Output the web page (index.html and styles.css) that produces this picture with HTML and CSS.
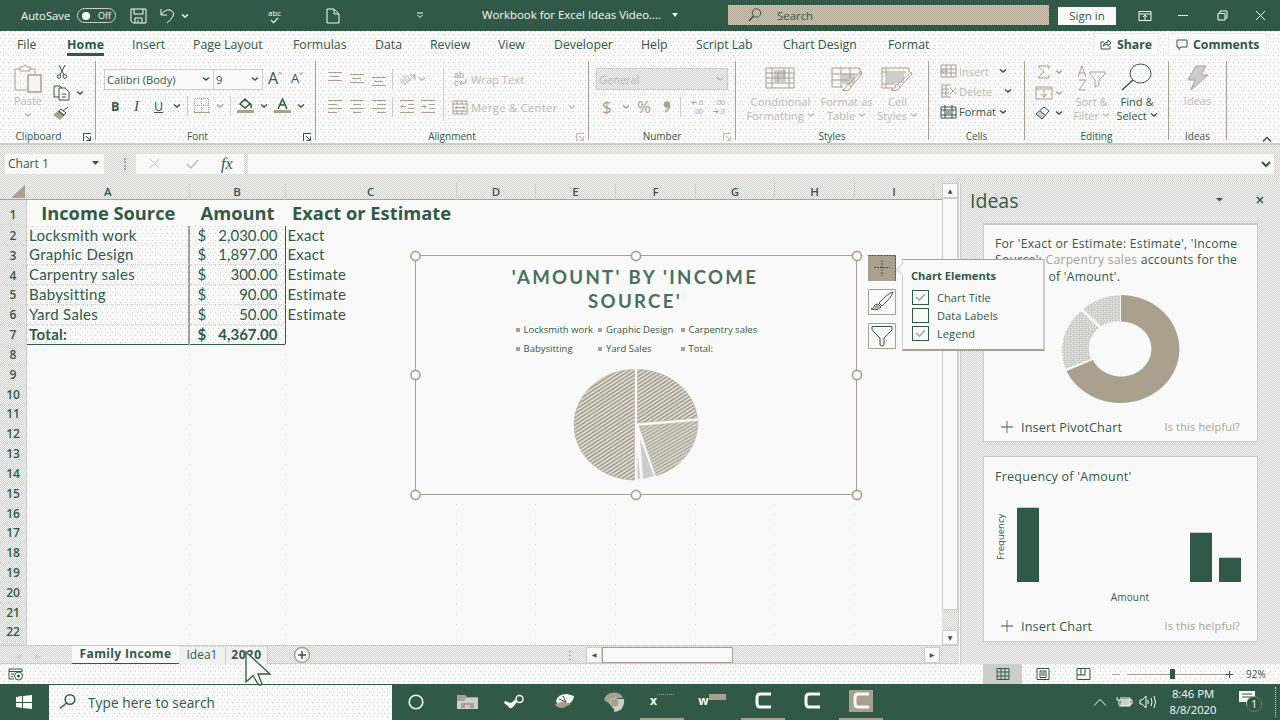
FILE: index.html
```html
<!DOCTYPE html>
<html lang="en">
<head>
<meta charset="utf-8">
<title>Workbook for Excel Ideas Video</title>
<link rel="stylesheet" href="styles.css">
</head>
<body>
<svg class="defs" width="0" height="0">
  <symbol id="chev" viewBox="0 0 8 6"><path d="M1 1.500L4 4L7 1.500" fill="none" stroke="currentColor" stroke-width="1.500"/></symbol>
  <symbol id="launch" viewBox="0 0 9 9"><path d="M.5 8V.5H8M3 3L7 7M7.500 3.500V7.500H3.500" fill="none" stroke="currentColor"/></symbol>
  <symbol id="camt" viewBox="0 0 24 22"><path d="M20 4H9Q6 4 6 8V13Q6 17 9 17H20" fill="none" stroke="#faf9f9" stroke-width="3"/></symbol>
  <symbol id="check" viewBox="0 0 10 8"><path d="M1 3.500L4 6.500L9 1" fill="none" stroke="currentColor" stroke-width="1.300"/></symbol>
</svg>
<div class="app">
  <header class="titlebar">
    <span class="autosave">AutoSave</span>
    <span class="toggle"><i></i>Off</span>
    <svg width="18" height="16"><path d="M1 1H16V15H3L1 13ZM4 1V6H13V1M5 15V10H12V15M8 12V15" class="ln lt"/></svg>
    <svg width="16" height="16"><path d="M1 1V7H7M1 7Q5 1 10 2Q15 4 13 8Q11 12 7 15" class="ln lt"/></svg>
    <svg width="8" height="6" class="tl"><use href="#chev"/></svg>
    <span class="abc">abc<svg width="9" height="7"><use href="#check"/></svg></span>
    <svg width="14" height="16"><path d="M1 1H8L13 6V15H1ZM8 1V6H13" class="ln lt"/></svg>
    <svg width="8" height="7"><path d="M1 1H7M1.500 3L4 5.500L6.500 3" class="ln lt"/></svg>
    <span class="doc">Workbook for Excel Ideas Video....</span>
    <svg width="8" height="6"><path d="M1 0H7L4 4Z" fill="#faf9f9"/></svg>
    <div class="search"><svg width="14" height="14"><circle cx="8.500" cy="5" r="4.200" class="ln"/><path d="M5.500 8L1 13" class="ln w15"/></svg><span>Search</span></div>
    <button class="signin">Sign in</button>
    <svg width="14" height="12"><path d="M1 1.500H13V10.500H1ZM1 4H13M7 10V5M5 7L7 5L9 7" class="ln lt"/></svg>
    <svg width="12" height="4"><path d="M0 1.500H10" class="ln lt"/></svg>
    <svg width="11" height="11"><path d="M1 3.500H8V10H1ZM3 3.500V1H10V8H8" class="ln lt"/></svg>
    <svg width="11" height="11"><path d="M0 1L9 10M9 1L0 10" class="ln lt"/></svg>
  </header>

  <section class="ribbon">
    <nav class="tabs">
      <span>File</span><span class="on">Home</span><span>Insert</span><span>Page Layout</span><span>Formulas</span><span>Data</span><span>Review</span><span>View</span><span>Developer</span><span>Help</span><span>Script Lab</span><span>Chart Design</span><span>Format</span>
      <span class="pill"><svg width="12" height="11"><path d="M4 3H1V10H10V7M3 7Q4 3 8 3V1L11 4L8 7V5Q5 5 3 7Z" class="ln"/></svg>Share</span>
      <span class="pill"><svg width="12" height="12"><path d="M1 1H11V8H5L3 10.500V8H1Z" class="ln"/></svg>Comments</span>
    </nav>
    <div class="groups">
      <div class="group g-clip">
        <div class="body">
          <div class="big off paste"><svg width="30" height="30"><path d="M7 5H2V26H14M17 5H22V10M7 7V3H10Q12 -1 14 3H17V7Z" class="ln ta"/><path d="M15 11H28V28H15Z" fill="#f5f5f3" class="ta w15"/></svg><span>Paste</span><svg width="8" height="6"><use href="#chev"/></svg></div>
          <div class="stack">
            <svg width="12" height="14"><path d="M3 0L8 10M9 0L4 10" class="ln"/><circle cx="3" cy="11.500" r="1.800" class="ln"/><circle cx="9" cy="11.500" r="1.800" class="ln"/></svg>
            <span class="pair"><svg width="18" height="16"><path d="M6 12H1V1H7L9 3M6 3H12L16 7V15H6ZM9 9H13M9 12H13" class="ln"/></svg><svg width="8" height="6"><use href="#chev"/></svg></span>
            <svg width="17" height="14"><path d="M15 1L10 5M8 3L13 7L11 9L6 5Z" class="ln"/><path d="M5 5L11 10L7 14L0 9Z" fill="#a9a18e"/><path d="M5 5L11 10" class="ln"/></svg>
          </div>
        </div>
        <footer>Clipboard</footer><svg class="launch" width="9" height="9"><use href="#launch"/></svg>
      </div>
      <div class="group g-font">
        <div class="body">
          <div class="r1"><span class="combo">Calibri (Body)<svg width="8" height="6"><use href="#chev"/></svg></span><span class="combo c9">9<svg width="8" height="6"><use href="#chev"/></svg></span><span class="bigA">A<svg width="6" height="5"><path d="M1 4L3 1L5 4" class="ln ta"/></svg></span><span class="smA">A<svg width="6" height="5"><path d="M1 1L3 4L5 1" class="ln ta"/></svg></span></div>
          <div class="r2"><b>B</b><i class="it">I</i><u>U</u><svg width="8" height="6"><use href="#chev"/></svg><em></em>
            <svg width="16" height="16"><path d="M.5 1V14M7.500 1V14M14.500 1V14M1 .5H15M1 7.500H15" class="ln ta" stroke-dasharray="1 1"/><path d="M0 14.500H16" class="ln ta"/></svg>
            <svg class="tan" width="8" height="6"><use href="#chev"/></svg><em></em>
            <svg width="17" height="16"><path d="M3 6L8 1L13 6L8 10ZM12 5Q15 6 14 10" class="ln w15"/><path d="M0 12H17V15H0Z" fill="#a9a18e"/></svg>
            <svg width="8" height="6"><use href="#chev"/></svg>
            <svg width="17" height="16"><path d="M4 11L8.500 1L13 11M6 7H11" class="ln w15"/><path d="M0 12H17V15H0Z" fill="#a9a18e"/></svg>
            <svg width="8" height="6"><use href="#chev"/></svg></div>
        </div>
        <footer>Font</footer><svg class="launch" width="9" height="9"><use href="#launch"/></svg>
      </div>
      <div class="group g-align off">
        <div class="body">
          <div class="lefts">
            <div class="r1"><svg width="16" height="16"><path d="M1 1.500H15M3 5.500H12M1 9.500H15" class="ln ta"/></svg><svg width="16" height="16"><path d="M1 3.500H15M3 7.500H12M1 11.500H15" class="ln ta"/></svg><svg width="16" height="16"><path d="M1 6.500H15M3 10.500H12M1 14.500H15" class="ln ta"/></svg><em></em><span class="rot"><span>ab</span><svg width="16" height="14"><path d="M3 13L14 3M9 3H14V8" class="ln ta"/></svg></span><svg width="8" height="6"><use href="#chev"/></svg></div>
            <div class="r2"><svg width="16" height="16"><path d="M1 1.500H15M1 5.500H10M1 9.500H15M1 13.500H10" class="ln ta"/></svg><svg width="16" height="16"><path d="M1 1.500H15M4 5.500H12M1 9.500H15M4 13.500H12" class="ln ta"/></svg><svg width="16" height="16"><path d="M1 1.500H15M6 5.500H15M1 9.500H15M6 13.500H15" class="ln ta"/></svg><em></em><svg width="16" height="16"><path d="M1 1.500H15M9 5.500H15M9 9.500H15M1 13.500H15M7 7.500H2M4 5.500L2 7.500L4 9.500" class="ln ta"/></svg><svg width="16" height="16"><path d="M1 1.500H15M9 5.500H15M9 9.500H15M1 13.500H15M1 7.500H6M4 5.500L6 7.500L4 9.500" class="ln ta"/></svg></div>
          </div>
          <div class="rights">
            <div class="r1"><span class="wrapic"><span>ab</span><span>c<svg width="8" height="7"><path d="M7 0V4H1M3 2L1 4L3 6" class="ln ta"/></svg></span></span><span>Wrap Text</span></div>
            <div class="r2"><svg width="16" height="15"><path d="M1 1H15V14H1ZM1 4H15M1 11H15M5 1V4M10 1V4M5 11V14M10 11V14M3 7.500H13M5 6L3 7.500L5 9M11 6L13 7.500L11 9" class="ln ta"/></svg><span class="merge">Merge &amp; Center</span><svg width="8" height="6"><use href="#chev"/></svg></div>
          </div>
        </div>
        <footer>Alignment</footer><svg class="launch" width="9" height="9"><use href="#launch"/></svg>
      </div>
      <div class="group g-num off">
        <div class="body">
          <div class="numbox">General<svg width="8" height="6"><use href="#chev"/></svg></div>
          <div class="r2"><span class="sym">$</span><svg width="8" height="6"><use href="#chev"/></svg><span class="sym">%</span><svg width="8" height="12"><circle cx="4" cy="3.500" r="3.200" fill="#a9a18e"/><path d="M6.300 3Q7 8 2 11" class="ln ta w15"/></svg><em></em><span class="dec"><span><svg width="6" height="5"><path d="M6 2.500H1M3 .5L1 2.500L3 4.500" class="ln ta"/></svg>.0</span><span>.00</span></span><span class="dec"><span>.00</span><span><svg width="6" height="5"><path d="M0 2.500H5M3 .5L5 2.500L3 4.500" class="ln ta"/></svg>.0</span></span></div>
        </div>
        <footer>Number</footer><svg class="launch" width="9" height="9"><use href="#launch"/></svg>
      </div>
      <div class="group g-styles off">
        <div class="body">
          <div class="big"><svg width="30" height="24"><path d="M9 4H21V16H9Z" fill="#cdcecb"/><path d="M1 2H29V22H1ZM1 7H29M1 12H29M1 17H29M7 2V22M13 7V17M19 2V12M24 2V22" class="ln ta"/></svg><span>Conditional<br>Formatting <svg width="8" height="6"><use href="#chev"/></svg></span></div>
          <div class="big"><svg width="32" height="26"><path d="M11 8H24V18H11Z" fill="#cdcecb"/><path d="M1 2H29V9M1 2V21H12M1 8H26M1 14H18M10 2V21M19 2V13M30 5L18 18L20 21L31 8ZM18 18Q15 18 15 21Q14 24 11 24Q18 26 20 21" class="ln ta"/></svg><span>Format as<br>Table <svg width="8" height="6"><use href="#chev"/></svg></span></div>
          <div class="big"><svg width="32" height="26"><path d="M6 7H23V17H6Z" fill="#cdcecb"/><path d="M1 2H28V6M1 2V22H12M1 6H25M5 2V22M1 18H14M30 6L17 18L19 21L31 8ZM17 18Q14 18 14 21Q13 24 10 24Q17 26 19 21" class="ln ta"/></svg><span>Cell<br>Styles <svg width="8" height="6"><use href="#chev"/></svg></span></div>
        </div>
        <footer>Styles</footer>
      </div>
      <div class="group g-cells">
        <div class="body">
          <div class="off"><svg width="17" height="14"><path d="M1 1H16V13H1ZM1 5H16M1 9H16M6 1V13M11 1V13M1 7H8M4 5L1 7L4 9" class="ln ta"/></svg><span>Insert</span><svg class="dk" width="8" height="6"><use href="#chev"/></svg></div>
          <div class="off"><svg width="17" height="14"><path d="M1 1H11M1 5H9M1 9H9M1 13H11M2 1V13M6 1V13M10 4L16 10M16 4L10 10" class="ln ta"/></svg><span>Delete</span><svg class="dk push" width="8" height="6"><use href="#chev"/></svg></div>
          <div><svg width="17" height="15"><path d="M1 3H16V14H1ZM1 6H16M1 11H16M5 1V14M12 1V14" class="ln"/><path d="M6 7H11V10H6Z" fill="#a9a18e"/></svg><span>Format</span><svg width="8" height="6"><use href="#chev"/></svg></div>
        </div>
        <footer>Cells</footer>
      </div>
      <div class="group g-edit">
        <div class="body">
          <div class="stack">
            <span class="pair tan"><svg width="18" height="14"><path d="M14 4V1H3L9 7L3 13H14V10" class="ln ta"/></svg><svg width="8" height="6"><use href="#chev"/></svg></span>
            <span class="pair tan"><svg width="18" height="14"><path d="M1 1H17V13H1ZM1 3H17M9 4V11M6 8L9 11L12 8" class="ln ta"/></svg><svg width="8" height="6"><use href="#chev"/></svg></span>
            <span class="pair"><svg width="18" height="14"><path d="M5 5L10 9L7 13L1 9Z" fill="#cdcecb"/><path d="M1 8L9 1L14 5L7 13ZM5 5L10 9" class="ln"/></svg><svg width="8" height="6"><use href="#chev"/></svg></span>
          </div>
          <div class="big off"><svg width="30" height="27"><path d="M1 12L5 1L9 12M2 8H8M2 15H9L2 25H9M13 7H28V9L22 15V20L18 22V15L13 9Z" class="ln ta"/></svg><span>Sort &amp;<br>Filter <svg width="8" height="6"><use href="#chev"/></svg></span></div>
          <div class="big"><svg width="30" height="28"><ellipse cx="18.500" cy="10.500" rx="10.500" ry="9.500" class="ln"/><path d="M11 17L0 27" class="ln w15"/></svg><span>Find &amp;<br>Select <svg width="8" height="6"><use href="#chev"/></svg></span></div>
        </div>
        <footer>Editing</footer>
      </div>
      <div class="group g-ideas">
        <div class="body"><div class="big off"><svg width="22" height="27"><path d="M9 1H19L14 10H21L4 25L8 15H1Z" fill="#cdcecb" class="ta"/></svg><span>Ideas</span></div></div>
        <footer>Ideas</footer>
      </div>
      <svg class="collapse" width="10" height="7"><path d="M1 5.500L5 1.500L9 5.500" class="ln w15"/></svg>
    </div>
  </section>

  <div class="fbar">
    <div class="name">Chart 1<svg width="7" height="4"><path d="M0 0H7L3.500 4Z" fill="#305a47"/></svg></div>
    <span class="grip"></span>
    <div class="fx"><svg width="12" height="10"><path d="M1 0L10 9M10 0L1 9" class="ln ss"/></svg><svg width="13" height="10"><path d="M1 5L5 9L12 1" class="ln ss w15"/></svg><i>fx</i></div>
    <div class="input"><svg width="10" height="7"><path d="M1 1L5 5L9 1" class="ln w2"/></svg></div>
  </div>

  <main class="work">
    <div class="sheetcol">
      <div class="cols"><span class="corner"></span><span>A</span><span>B</span><span>C</span><span>D</span><span>E</span><span>F</span><span>G</span><span>H</span><span>I</span></div>
      <div class="sheet">
        <div class="nums"><span>1</span><span>2</span><span>3</span><span>4</span><span>5</span><span>6</span><span>7</span><span>8</span><span>9</span><span>10</span><span>11</span><span>12</span><span>13</span><span>14</span><span>15</span><span>16</span><span>17</span><span>18</span><span>19</span><span>20</span><span>21</span><span>22</span></div>
        <div class="cells">
          <div class="row head"><span class="h1">Income Source</span><span class="h2">Amount</span><span class="h3">Exact or Estimate</span></div>
          <div class="row"><span class="a">Locksmith work</span><span class="b"><i>$</i>2,030.00</span><span class="c">Exact</span></div>
          <div class="row"><span class="a">Graphic Design</span><span class="b"><i>$</i>1,897.00</span><span class="c">Exact</span></div>
          <div class="row"><span class="a">Carpentry sales</span><span class="b"><i>$</i>300.00</span><span class="c">Estimate</span></div>
          <div class="row"><span class="a">Babysitting</span><span class="b"><i>$</i>90.00</span><span class="c">Estimate</span></div>
          <div class="row"><span class="a">Yard Sales</span><span class="b"><i>$</i>50.00</span><span class="c">Estimate</span></div>
          <div class="row total"><span class="a">Total:</span><span class="b"><i>$</i>4,367.00</span><span class="c"></span></div>
          <div class="lines"><i></i><i></i><i></i><i></i><i></i><i></i><i></i><i></i></div>
        </div>
        <div class="chart">
          <h2>'AMOUNT' BY 'INCOME<br>SOURCE'</h2>
          <div class="legend"><span><i></i>Locksmith work</span><span><i></i>Graphic Design</span><span><i></i>Carpentry sales</span><span><i></i>Babysitting</span><span><i></i>Yard Sales</span><span><i></i>Total:</span></div>
          <svg class="pie" width="126" height="114" viewBox="0 0 126 114">
            <defs><pattern id="hatch" width="3" height="3.200" patternUnits="userSpaceOnUse" patternTransform="rotate(-33)"><path d="M0 0H3V3.200H0Z" fill="#eceae6"/><path d="M0 0H3V1.900H0Z" fill="#a9a18e"/></pattern>
            <pattern id="hatch2" width="3" height="3" patternUnits="userSpaceOnUse" patternTransform="rotate(-30)"><path d="M0 0H3V3H0Z" fill="#e0dfda"/><path d="M0 0H3V1.500H0Z" fill="#a9a18e"/></pattern></defs>
            <path d="M61.500 1.500A60.500 55.250 0 0 0 61.500 112Z" fill="url(#hatch)" stroke="#b5afa0" stroke-width=".6"/>
            <path d="M64.500 1.500A61 54 0 0 1 124.500 50L64.500 55Z" fill="url(#hatch)" stroke="#b5afa0" stroke-width=".6"/>
            <path d="M66 58L125 53A61 56 0 0 1 83 108Z" fill="url(#hatch2)" stroke="#b5afa0" stroke-width=".4"/>
            <path d="M67 70L81 108L70 111Z" fill="#cdcecb"/><path d="M64.500 84L67.500 111H64.500Z" fill="#cdcecb"/>
          </svg>
          <svg class="handles" width="452" height="250" fill="#faf9f9" stroke="#a9a18e" stroke-width="1.600"><circle cx="5.500" cy="6" r="4.600"/><circle cx="226" cy="6" r="4.600"/><circle cx="447" cy="6" r="4.600"/><circle cx="5.500" cy="125" r="4.600"/><circle cx="447" cy="125" r="4.600"/><circle cx="5.500" cy="245" r="4.600"/><circle cx="226" cy="245" r="4.600"/><circle cx="447" cy="245" r="4.600"/></svg>
        </div>
        <div class="tools">
          <svg width="28" height="26"><path d="M0 0H28V26H0Z" fill="#a9a18e"/><path d="M.5 .5H27.500V25.500" class="ln" stroke-dasharray="2 1"/><path d="M14 5V21M6 12.500H22" class="ln" stroke-dasharray="2 1"/></svg>
          <svg width="28" height="26"><path d="M.5 .5H27.500V25.500H.5Z" class="ln ta"/><path d="M25 3Q20 4 11 14L14 17Q23 9 25 3ZM10 15Q6 15 6 18Q5 20 3 20Q10 22 13 18Z" fill="#faf9f9" class="dkst"/><path d="M10 16Q7 16 7 18L6 20Q10 20 12 18Z" fill="#a9a18e"/></svg>
          <svg width="28" height="26"><path d="M.5 .5H27.500V25.500H.5Z" class="ln ta"/><path d="M4 3.500H24V7L16 15V22Q14 24 12 22V15L4 7Z" class="ln"/></svg>
        </div>
      </div>
    </div>
    <div class="vscroll"><span class="btn">▲</span><span class="thumb"></span><span class="gap"></span><span class="btn">▼</span></div>
    <div class="flyout"><b>Chart Elements</b><label><i><svg width="11" height="9"><use href="#check"/></svg></i>Chart Title</label><label><i></i>Data Labels</label><label><i><svg width="11" height="9"><use href="#check"/></svg></i>Legend</label></div>
    <div class="sheettabs"><span class="arr">◂</span><span class="arr">▸</span><b class="cur">Family Income</b><span class="st">Idea1</span><b class="st">2020</b><svg width="18" height="18"><circle cx="9" cy="9" r="7.500" fill="#faf9f9" class="ta w15"/><path d="M9 5V13M5 9H13" class="ln w15"/></svg><span class="dots"></span><div class="hs"><span class="btn">◀</span><span class="thumb"></span><span></span><span class="btn">▶</span></div></div>
    <aside class="pane">
      <div class="phead"><h1>Ideas</h1><svg width="7" height="5"><path d="M0 0H7L3.500 3.500Z" fill="#305a47"/></svg><svg width="8" height="8"><path d="M1 1L7 7M7 1L1 7" class="ln w15"/></svg></div>
      <div class="card c1">
        <p>For 'Exact or Estimate: Estimate', 'Income<br>Source': <span>Carpentry sales</span> accounts for the<br><span class="maj">majority</span> of 'Amount'.</p>
        <svg width="122" height="112" viewBox="0 0 122 112">
          <defs><pattern id="dots" width="3" height="4" patternUnits="userSpaceOnUse"><path d="M0 0H4V4H0Z" fill="#cdcecb"/><path d="M0 0H1V1H0ZM2 2H3V3H2Z" fill="#faf9f9"/></pattern></defs>
          <path d="M61 2A59 54 0 1 1 6.500 78L33 67A30.500 27.500 0 1 0 61 28.500Z" fill="#a9a18e"/>
          <path d="M5.500 76A59 54 0 0 1 21 18L39 35A30.500 27.500 0 0 0 31 66Z" fill="url(#dots)"/>
          <path d="M23 16A59 54 0 0 1 60 2V28.500A30 27 0 0 0 41 33Z" fill="url(#dots)"/>
        </svg>
        <div class="act"><svg width="14" height="14"><path d="M7 1V13" class="ln ta w15"/><path d="M1 7H13" class="ln"/></svg><span>Insert PivotChart</span><small>Is this helpful?</small></div>
      </div>
      <div class="card c2">
        <p>Frequency of 'Amount'</p>
        <div class="freq"><span class="yl">Frequency</span><div class="bars"><i style="height:75px"></i><i style="height:50px"></i><i style="height:25px"></i></div></div>
        <div class="xl">Amount</div>
        <div class="act"><svg width="14" height="14"><path d="M7 1V13" class="ln ta w15"/><path d="M1 7H13" class="ln"/></svg><span>Insert Chart</span><small>Is this helpful?</small></div>
      </div>
    </aside>
  </main>

  <div class="status">
    <svg width="16" height="13"><path d="M1 1H14V4M1 1V11H6M1 3.500H14M3 6H6M3 8.500H5" class="ln"/><circle cx="10.500" cy="8" r="4" class="ln"/><circle cx="10.500" cy="8" r="1.500" fill="#305a47"/></svg>
    <span class="view"><svg width="14" height="12"><path d="M1 .5H13V11.500H1ZM1 4H13M1 8H13M5 .5V12M9 .5V12" class="ln"/></svg></span>
    <svg width="14" height="12"><path d="M1 .5H13V11.500H1ZM4 3H10V9.500H4ZM5 5H9M5 7H9" class="ln"/></svg>
    <svg width="15" height="12"><path d="M1 .5H14V11.500H1ZM5 1V7H1M9 1V7M5 7H9" class="ln"/></svg>
    <svg width="9" height="9"><path d="M0 4.500H8" class="ln ta"/></svg>
    <svg width="100" height="12"><path d="M0 6.500H99" class="ln ta"/><path d="M43 1H48V11H43Z" fill="#305a47"/></svg>
    <svg width="9" height="9"><path d="M0 4.500H7M3.500 1V8" class="ln"/></svg>
    <span class="pct">92%</span>
  </div>

  <div class="taskbar">
    <svg width="17" height="15"><path d="M0 2L6 1V7H0ZM7 1L16 0V7H7ZM0 8H6V13L0 12ZM7 8H16V14L7 13Z" fill="#faf9f9"/></svg>
    <div class="tsearch"><svg width="18" height="16"><circle cx="11" cy="5.500" r="4.800" class="ln w15"/><path d="M7.500 9L1 14.500" class="ln w15"/></svg>Type here to search</div>
    <svg width="17" height="16"><circle cx="8" cy="8" r="6.800" fill="none" stroke="#faf9f9" stroke-width="1.600"/></svg>
    <svg width="23" height="18"><path d="M1 2H9L11 4H22V16H1Z" fill="#a9a18e"/><path d="M1 8H8L10 5H22V16H1Z" fill="#cdcecb"/><path d="M5 10H18V15H14V12H9V15H5Z" fill="#a9a18e"/></svg>
    <svg width="21" height="18"><circle cx="15.500" cy="6" r="3.500" fill="none" stroke="#faf9f9" stroke-width="1.500"/><path d="M13 9L9 14Q6 17 4 13L0 10L1 8L7 10L12 6Z" fill="#faf9f9"/></svg>
    <svg width="21" height="18"><path d="M2 8Q4 1 13 1L20 3Q20 8 14 11L5 13Z" fill="#faf9f9"/><path d="M1 11L10 8L17 11L9 15Q2 15 1 11Z" fill="#a9a18e"/><path d="M9 3L12 9L5 6" fill="none" stroke="#305a47"/></svg>
    <svg width="23" height="22"><path d="M1 9A10 9 0 0 1 20 7H11L7 13Z" fill="#a9a18e"/><path d="M2 10L8 16Q12 17 11 21Q22 20 21 8H15L14 15L8 16Z" fill="#cdcecb"/><circle cx="11.500" cy="11.500" r="4.500" fill="#a9a18e" stroke="#cdcecb"/></svg>
    <span class="ico on"><b>x</b><i></i></span>
    <span class="ico"><b>w</b><i class="f"></i></span>
    <span class="ico on"><svg width="24" height="22"><use href="#camt"/></svg></span>
    <span class="ico"><svg width="24" height="22"><use href="#camt"/></svg></span>
    <span class="ico on"><svg class="bgt" width="24" height="22"><use href="#camt"/></svg></span>
    <svg width="14" height="9"><path d="M1 7.500L7 1.500L13 7.500" class="ln lt"/></svg>
    <svg width="17" height="12"><path d="M5 3H14V10H4Z" fill="#cdcecb"/><path d="M6 2H14V10H3M14 4H16V8H14M1 1V4H5V1M3 4V9" class="ln lt"/></svg>
    <svg width="18" height="14"><path d="M1 5H3L7 1V13L3 9H1ZM9 5V9M12 3Q14 7 12 11M15 1Q18 7 15 13" class="ln lt"/></svg>
    <div class="clock">8:46 PM<br>8/8/2020</div>
    <svg width="26" height="24"><path d="M0 1H16V12H10L7 16V12H0Z" fill="#faf9f9"/><path d="M3 4H13M3 7H13" class="ln"/><circle cx="15" cy="14" r="7.500" fill="#305a47" stroke="#a9a18e" stroke-dasharray="1 1"/><text x="12" y="18" class="badge">1</text></svg>
    <span class="desk"></span>
  </div>
  <svg class="cursor" width="28" height="38"><path d="M2 2V32L9 25.500L14 34Q16 36 18 34L14 24H26Z" fill="#faf9f9" stroke="#305a47" stroke-width="1.300"/></svg>
</div>
</body>
</html>
```
FILE: styles.css
```css
:root{--g:#305a47;--l:#faf9f9;--s:#cdcecb;--t:#a9a18e;
--mesh:repeating-conic-gradient(#cdcecb 0 25%,#faf9f9 0 50%) 0 0/2px 2px;
--dust:conic-gradient(from 270deg at 1px 1px,#cdcecb 90deg,transparent 0) 0 0/5px 7px,conic-gradient(from 270deg at 1px 1px,#cdcecb 90deg,transparent 0) 3px 3px/5px 7px,#faf9f9}
*{box-sizing:border-box}
body{margin:0;background:var(--l);font-family:"Open Sans","Noto Sans",sans-serif;font-size:12px;color:var(--g)}
svg{display:block;flex:none;overflow:visible}
.defs{position:absolute}
.ln{fill:none;stroke:var(--g);stroke-width:1}
.ta{stroke:var(--t)}.lt{stroke:var(--l)}.ss{stroke:#c0bdb3}
.dkst{stroke:var(--g)}
.w15{stroke-width:1.5}.w2{stroke-width:2}
.tan{color:var(--t)}
.app{position:relative;width:1280px;height:720px;overflow:hidden;display:flex;flex-direction:column;white-space:nowrap}

.titlebar{height:31px;background:var(--g);color:var(--l);display:grid;align-items:center;padding-left:21px;font-size:11.300px;
grid-template-columns:56px 53px 30px 21px 87px 58px 90px 66px 189px 57px 330px 80px 40px 39px 39px 1fr}
.tl{color:var(--l)}
.toggle{width:39px;height:15px;border:1px solid var(--s);border-radius:8px;display:flex;align-items:center;gap:8px;padding-left:4px;font-size:9px}
.toggle i{width:8px;height:8px;border-radius:50%;background:var(--l)}
.abc{font-size:8px;line-height:9px}.abc svg{margin-left:2px}
.doc{font-size:11.400px;margin-top:-2px}
.search{width:321px;height:20px;margin-top:-1px;background:repeating-conic-gradient(#a9a18e 0 25%,#cdcecb 0 50%) 0 0/2px 2px;color:var(--g);display:flex;align-items:center;padding-left:20px;gap:15px;font-size:11.400px;font-weight:500}
.signin{width:58px;height:18px;border:0;background:var(--l);color:var(--g);font:11.500px "Open Sans",sans-serif;padding:0}

.ribbon{height:114px;background:var(--dust);border-bottom:2px solid var(--s)}
.tabs{height:29px;display:grid;padding-left:17px;grid-template-columns:50px 65px 61px 100px 82px 55px 68px 56px 87px 55px 87px 105px 205px 75px 99px;line-height:27px;font-size:12.300px}
.tabs .on{font-weight:700;width:37px;border-bottom:3px solid var(--g);height:25px;letter-spacing:.2px}
.pill{display:flex;align-items:center;gap:5px;font-weight:700;background:var(--l);height:23px;margin-top:2px;width:66px;border:1px dotted #dededc;padding-left:6px;line-height:20px}
.pill+.pill{width:99px;padding-left:7px}
.groups{display:flex;height:83px;padding-top:1px}
.group{position:relative;border-right:1px solid var(--t);height:79px;display:flex;flex-direction:column;flex:none}
.group footer{height:13px;line-height:13px;font-size:10px;text-align:center;color:var(--g);margin-top:auto;margin-bottom:-3px}
.group .body{height:66px}
.launch{position:absolute;right:3px;bottom:-2px;width:9px}
.off{color:#bdbab0}
.group em{width:1px;height:20px;background:var(--s)}
.big{display:flex;flex-direction:column;align-items:center;text-align:center;font-size:11px;line-height:14px}
.big span svg{display:inline-block;vertical-align:2px}
.stack{display:grid;grid-template-rows:21px 21px 20px;align-items:center}
.pair{display:flex;align-items:center;gap:5px}
.r1,.r2{display:grid;align-items:center}
.g-clip{width:96px}.g-clip footer{padding-right:18px;font-size:10.200px}
.g-clip .body{display:grid;grid-template-columns:37px 1fr;padding-left:16px}
.g-clip .stack svg:first-child{margin-left:3px}.g-clip .pair svg:first-child{margin-left:0!important}
.paste{margin-left:-6px;padding-top:3px;width:36px}.paste>span{margin-top:0}.paste>svg:last-child{margin-top:4px}
.g-font{width:220px}.g-font .body{padding:7px 0 0 8px}.g-font footer{padding-right:16px}
.g-font .r1{height:22px;grid-template-columns:110px 54px 23px 1fr}
.combo{height:21px;border:1px solid var(--s);background:var(--l);display:flex;align-items:center;justify-content:space-between;padding:0 3px 0 2px;font-size:11.100px}
.combo.c9{width:50px;border-left:1px solid var(--s);margin-left:-1px}
.bigA,.smA{font-size:16px;font-weight:400;display:flex;line-height:18px;margin:-3px 0 0}.smA{font-size:13px}
.bigA svg,.smA svg{margin:2px 0 0 -1px}
.g-font .r2{height:26px;margin-top:3px;padding-left:7px;font-size:12.500px;grid-template-columns:23px 20px 19px 14px 7px 22px 14px 7px 23px 14px 23px 1fr}
.it{font-family:"Liberation Serif",serif;font-size:15px}
.g-align{width:273px}.g-align .body{display:flex;padding-top:7px}
.lefts{padding-left:11px;width:128px;border-right:1px solid var(--s);height:53px}
.g-align .r1{height:22px}.g-align .r2{height:26px;margin-top:4px}
.lefts .r1{grid-template-columns:22px 22px 21px 7px 19px 1fr}.lefts .r2{grid-template-columns:22px 22px 21px 7px 21px 1fr}
.rot{display:flex}.rot span{transform:rotate(-35deg);font-size:9px;width:10px}.rot svg{margin-left:-8px}
.rights{padding-left:8px}.rights .r1,.rights .r2{grid-template-columns:19px 97px 1fr;font-size:11.200px}
.merge{letter-spacing:.3px}
.wrapic{display:grid;font:9px/8px "Liberation Sans",sans-serif;padding-left:2px;color:var(--t)}.wrapic svg{display:inline-block}
.g-num{width:147px}.g-num .body{padding:7px 0 0 7px}
.numbox{width:132px;height:22px;border:1px solid var(--s);background:var(--mesh);display:flex;align-items:center;justify-content:space-between;padding:0 3px 0 2px;font-size:11px}
.g-num .r2{height:26px;margin-top:4px;padding-left:6px;color:var(--t);grid-template-columns:20px 15px 26px 17px 7px 22px 1fr}
.sym{font-size:17px;line-height:20px}.dec{display:grid;justify-items:end;width:16px;font:7px/9px "Liberation Sans",sans-serif}.dec svg{display:inline-block}
.g-styles{width:193px}.g-styles .body{display:grid;grid-template-columns:75px 57px 45px;padding:5px 0 0 7px;justify-items:center}
.g-styles .big{font-size:11.200px}.g-styles .big>span{margin-top:auto;margin-bottom:3px}
.g-cells{width:96px}.g-cells .body{padding-left:11px;display:grid;grid-template-rows:20px 20px 21px}
.g-cells .body>div{display:grid;grid-template-columns:19px 40px 1fr;align-items:center;font-size:11px}
.dk{color:var(--g)}.push{margin-left:5px}
.g-edit{width:144px}.g-edit .body{padding-left:10px;display:grid;grid-template-columns:34px 45px 46px}
.g-edit .pair{gap:2px}
.g-edit .big{padding-top:4px}.g-edit .big>span{margin-top:auto;margin-bottom:4px}.g-edit .big+.big{padding-top:2px}
.g-styles .body>.big{height:60px}.g-edit .body>.big{height:66px}
.g-edit .big>svg,.g-edit .big+.big>svg{height:27px}
.g-ideas{width:58px}.g-ideas .big{padding-top:4px}.g-ideas .big span{margin-top:2px}
.collapse{margin:75px 0 0 35px}

.fbar{height:38px;background:var(--mesh);display:grid;grid-template-columns:105px 26px 112px 1fr;padding:9px 6px 9px 5px;align-items:stretch}
.name{width:99px;background:var(--l);display:flex;align-items:center;justify-content:space-between;padding:0 5px 2px 3px;font-size:12px;height:20px}
.grip{width:3px;height:12px;margin:4px 0 0 14px;border-left:2px dotted var(--t)}
.fx{background:var(--l);width:108px;height:20px;display:grid;grid-template-columns:37px 35px 1fr;padding-left:13px;align-items:center}
.fx i{font:italic 16px "Liberation Serif",serif}
.input{background:var(--l);height:20px;display:flex;align-items:center;justify-content:flex-end;padding-right:3px}

.work{position:relative;height:481px;display:grid;grid-template-columns:942px 17px 1fr;grid-template-rows:462px 19px}
.sheetcol{grid-area:1/1}
.vscroll{grid-area:1/2}.sheettabs{grid-area:2/1/3/3}.pane{grid-area:1/3/3/4}
.cols{height:17px;background:var(--mesh);border-bottom:1px solid var(--t);display:grid;grid-template-columns:27px 162.500px 96px 171.500px 79px 80px 80px 79px 80px 79px;text-align:center;line-height:17px;font-size:11.500px;font-weight:600}
.cols span+span{border-right:1px solid var(--s)}
.corner{width:14px;height:13px;margin:2px 0 0 11px;background:var(--t);clip-path:polygon(100% 0,100% 100%,0 100%)}
.sheet{position:relative;height:445px;display:flex;overflow:visible}
.nums{width:27px;background:var(--mesh);border-right:1px solid var(--s);display:grid;grid-template-rows:25.500px repeat(21,19.830px);font-weight:600;font-size:12px;text-align:center;align-items:center;height:445px;line-height:18px}
.nums span{border-bottom:1px solid #dcdcda;padding-top:2px}
.nums span:first-child{padding-top:6px}
.cells{position:relative;width:915px;display:grid;grid-template-rows:25.500px repeat(6,19.830px) 1fr;font-family:Lato,"Open Sans",sans-serif;font-size:15px}
.row{display:grid;grid-template-columns:162.500px 96px 172px;line-height:19px}
.head{font:700 18.300px/26px "Open Sans",sans-serif;text-align:center}
.h1,.h2{border-bottom:2px solid var(--t)}
.a,.b{background:var(--dust)}
.a{padding-left:2px;border-right:2px solid var(--t);border-bottom:1px dotted var(--s);letter-spacing:.3px}
.b{display:flex;justify-content:space-between;padding:0 7px 0 8px;border-right:1px solid var(--g);border-bottom:1px dotted var(--s)}
.b i{font-style:normal}.c{padding-left:2px;letter-spacing:.2px}
.total{font-weight:700}.total .a,.total .b{border-bottom:1px solid var(--g)}
.lines{display:grid;grid-template-columns:162.500px 96px 171.500px 79px 80px 80px 79px 80px}
.lines i{background:repeating-linear-gradient(#dcdcda 0 1px,transparent 1px 10px) 100% 0/1px 100% no-repeat}
.chart{position:absolute;left:415px;top:55px;width:442px;height:240px;border:1px solid var(--t);background:var(--l);display:flex;flex-direction:column;align-items:center}
.chart h2{font:700 18.600px/24px Lato,sans-serif;letter-spacing:2.300px;text-align:center;margin:9px 2px 7px 0;color:#49705f}
.legend{display:grid;grid-template-columns:82.500px 82.500px 80px;font:500 9.500px/19px "Open Sans",sans-serif;padding-left:4px}
.legend span{display:flex;align-items:center;gap:4px}.legend i{width:4px;height:4px;background:var(--t)}
.pie{margin-top:10px}
.handles{position:absolute;left:-6px;top:-6px}
.tools{position:absolute;left:868px;top:55px;display:flex;flex-direction:column;gap:8px}
.vscroll{border-right:1px solid var(--s);background:var(--mesh);display:flex;flex-direction:column;width:17px}
.btn{height:15px;background:var(--l);border:1px solid var(--s);font:6px/13px "DejaVu Sans",sans-serif;text-align:center}
.thumb{background:var(--l);border:1px solid var(--t)}
.vscroll .thumb{height:413px;border-color:var(--s)}.vscroll .gap{height:20px}
.flyout{position:absolute;left:902px;top:76px;width:143px;height:92px;background:var(--l);border:1px solid var(--s);border-top-color:var(--t);border-right:2px solid var(--s);border-bottom:2px solid var(--t);padding:8px 8px;font-size:11px;z-index:3}
.flyout::before{content:"";position:absolute;left:-5px;top:5px;width:8px;height:8px;background:var(--l);border-left:1px solid var(--s);border-bottom:1px solid var(--s);transform:rotate(45deg)}
.flyout b{display:block;line-height:16px;margin-bottom:4px;font-size:11.100px}
.flyout label{display:flex;align-items:center;gap:8px;height:18px;padding-left:1px;letter-spacing:.1px}
.flyout label i{width:17px;height:15px;border:1px solid var(--g);display:grid;place-items:center;color:var(--t)}
.sheettabs{background:var(--mesh);border-top:1px solid var(--s);border-bottom:1px solid var(--s);display:grid;grid-template-columns:20px 37px 107px 47px 63px 280px 18px 1fr;padding-left:15px;font-size:12px;line-height:15px;align-items:center}
.arr{color:#d0d0cc}
.cur{background:var(--l);border-bottom:1px solid var(--g);text-align:center;height:18px;letter-spacing:.35px}
.st{background:#f0f0ee;border-right:1px solid var(--s);text-align:center;height:17px}
b.st{width:42px;letter-spacing:.8px}
.dots{height:9px;width:2px;background:repeating-linear-gradient(var(--t) 0 1px,transparent 1px 4px)}
.hs{display:grid;grid-template-columns:16px 131px 191px 16px;margin-left:-1px}
.hs .thumb{height:16px}.hs .btn{height:16px;line-height:14px}
.sheettabs>svg{margin-left:4px}

.pane{background:var(--mesh);border-left:1px solid var(--s);padding:0 23px 0 23px;margin-left:1px}
.phead{height:40px;display:grid;grid-template-columns:246px 40px 1fr;margin-left:-14px;align-items:center}
.phead svg{margin-top:-6px}
.phead h1{margin:-4px 0 0;font-size:19.500px;font-weight:400;line-height:36px}
.card{width:275px;background:var(--l);border:1px solid var(--s);margin-left:-1px;padding:11px 17px 0 11px}
.c1{height:219px;border-top-width:2px}.c1 p{margin:0;line-height:16.300px;font-size:12.200px;letter-spacing:.25px}.c1 p span{color:var(--t)}
.c1 p .maj{display:inline-block;width:50px;color:var(--g)}
.c1>svg{margin:8px 0 0 65px}
.act{display:grid;grid-template-columns:21px 1fr auto;padding-left:5px;align-items:center;font-size:12.700px;line-height:18px;letter-spacing:.1px}
.act small{font-size:11px;color:var(--t);letter-spacing:.15px}
.c1 .act{margin-top:13px}
.c2{height:186px;margin-top:14px}.c2 p{margin:0;font-size:12.500px;line-height:17px;letter-spacing:.25px}
.freq{display:grid;grid-template-columns:22px 1fr;margin-top:21px;height:76px}
.yl{writing-mode:vertical-rl;transform:rotate(180deg);font-size:9.500px;line-height:11px;width:11px;height:62px;text-align:center}
.bars{display:grid;grid-template-columns:22px 137px 22px 22px;column-gap:7px;align-items:end;height:76px}
.bars i{background:var(--g);border-top:1px solid var(--s)}
.bars i:nth-child(2){grid-column:3}
.xl{text-align:center;font-size:10px;letter-spacing:.2px;line-height:14px;margin:8px 0 13px 25px}

.status{height:20px;background:var(--dust);display:grid;grid-template-columns:975px 53px 40px 36px 15px 99px 21px 1fr;padding-left:8px;align-items:center}
.view{background:var(--s);width:39px;height:20px;display:grid;place-items:center}
.pct{font-size:10px;margin-left:-1px}
.taskbar{height:36px;background:var(--g);color:var(--l);display:grid;align-items:center;padding-left:16px;grid-template-columns:33px 359px 48px 48px 50px 49px 37px 50px 51px 49px 49px 254px 23px 23px 27px 73px 36px 1fr}
.tsearch{width:343px;height:35px;background:var(--dust);color:var(--g);display:flex;align-items:center;gap:11px;padding-left:10px;font-size:13.600px;letter-spacing:.1px}
.ico{width:44px;height:36px;display:flex;align-items:center;justify-content:center;border-bottom:2px solid transparent}
.ico.on{border-color:var(--t)}
.ico b{font-size:12px;line-height:14px}.ico i{width:17px;height:5px;border-top:1px dotted var(--t);margin-top:-9px}.ico i.f{background:var(--t);height:6px}
.bgt{background:var(--t)}
.clock{text-align:center;font-size:11.300px;line-height:16px;width:54px}
.badge{font-size:11px;fill:var(--l)}
.desk{height:30px;border-left:1px dotted var(--s)}
.cursor{position:absolute;left:244px;top:650px}
```
